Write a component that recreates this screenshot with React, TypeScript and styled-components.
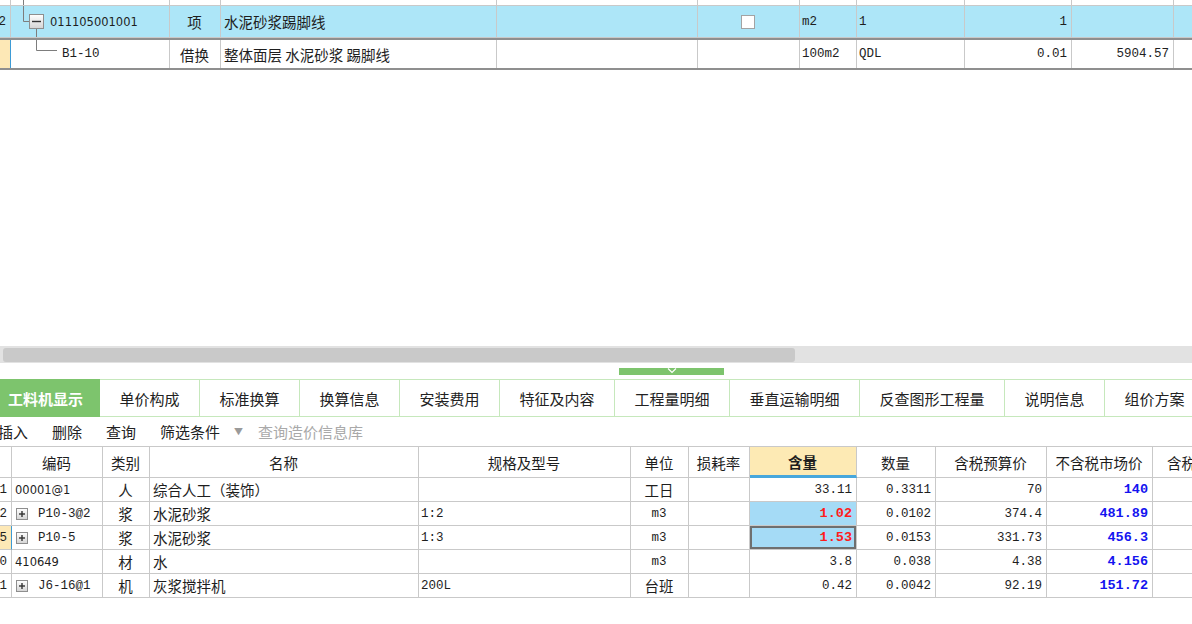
import React from 'react';
import styled, { createGlobalStyle, css } from 'styled-components';

// ============================================================================
// CONSTANTS
// ============================================================================

const CJK = `"Noto Sans CJK SC", "Microsoft YaHei", sans-serif`;
const MONO = `"Liberation Mono", "Noto Sans CJK SC", monospace`;
const SANS = `"DejaVu Sans", "Noto Sans CJK SC", sans-serif`;

const LINE = '#c9c9c9';
const TAB_LINE = '#c6e8bc';
const GREEN = '#7dc46d';
const ROW_BLUE = '#ade6f8';
const CELL_BLUE = '#a5dbf6';
const SEL_YELLOW = '#fde8b6';

const TOP_COLS = [11, 159, 51, 276, 201, 102, 57, 108, 107, 102, 100];
const BOTTOM_COLS = [12, 91, 47, 269, 212, 58, 61, 107, 79, 111, 106, 100];

const TABS = [
    { label: '工料机显示', width: 108, active: true },
    { label: '单价构成', width: 100 },
    { label: '标准换算', width: 100 },
    { label: '换算信息', width: 100 },
    { label: '安装费用', width: 100 },
    { label: '特征及内容', width: 115 },
    { label: '工程量明细', width: 115 },
    { label: '垂直运输明细', width: 130 },
    { label: '反查图形工程量', width: 145 },
    { label: '说明信息', width: 100 },
    { label: '组价方案', width: 100 },
];

const HEADERS = ['', '编码', '类别', '名称', '规格及型号', '单位', '损耗率', '含量', '数量', '含税预算价', '不含税市场价', '含税'];

interface MaterialRow {
    no: string;
    code: string;
    plus?: boolean;
    type: string;
    name: string;
    spec: string;
    unit: string;
    qty: string;
    amount: string;
    budget: string;
    market: string;
    hot?: boolean;
    selected?: boolean;
}

const MATERIALS: MaterialRow[] = [
    { no: '1', code: '00001@1', type: '人', name: '综合人工（装饰）', spec: '', unit: '工日', qty: '33.11', amount: '0.3311', budget: '70', market: '140' },
    { no: '2', code: 'P10-3@2', plus: true, type: '浆', name: '水泥砂浆', spec: '1:2', unit: 'm3', qty: '1.02', amount: '0.0102', budget: '374.4', market: '481.89', hot: true },
    { no: '5', code: 'P10-5', plus: true, type: '浆', name: '水泥砂浆', spec: '1:3', unit: 'm3', qty: '1.53', amount: '0.0153', budget: '331.73', market: '456.3', hot: true, selected: true },
    { no: '10', code: '410649', type: '材', name: '水', spec: '', unit: 'm3', qty: '3.8', amount: '0.038', budget: '4.38', market: '4.156' },
    { no: '11', code: 'J6-16@1', plus: true, type: '机', name: '灰浆搅拌机', spec: '200L', unit: '台班', qty: '0.42', amount: '0.0042', budget: '92.19', market: '151.72' },
];

// ============================================================================
// STYLED COMPONENTS
// ============================================================================

const GlobalStyle = createGlobalStyle`
  *, *::before, *::after { box-sizing: border-box; }
  html, body { margin: 0; padding: 0; background: #fff; }
  body {
    width: 1192px;
    height: 624px;
    overflow: hidden;
    font-family: ${CJK};
    color: #1e1e1e;
  }
`;

const Page = styled.div`
  width: 1192px;
  height: 624px;
  display: flex;
  flex-direction: column;
  overflow: hidden;
  background: #fff;
`;

const UpperPanel = styled.div`
  height: 363px;
  flex-shrink: 0;
  display: flex;
  flex-direction: column;
`;

const TopGridViewport = styled.div`
  height: 70px;
  overflow: hidden;
`;

const TopGridBody = styled.div`
  margin-top: -24px;
`;

const Row = styled.div<{ $cols: number[]; $h: number; $bg?: string; $focused?: boolean }>`
  display: grid;
  grid-template-columns: ${({ $cols }) => $cols.map((c) => `${c}px`).join(' ')};
  height: ${({ $h }) => $h}px;
  background: ${({ $bg }) => $bg ?? '#fff'};

  ${({ $focused }) => $focused && css`
    border-top: 2px solid #8f8f8f;
    border-bottom: 2px solid #8f8f8f;

    & > div {
      border-bottom: none;
    }
  `}
`;

type Align = 'left' | 'center' | 'right';
type Face = 'cjk' | 'mono' | 'sans';

const JUSTIFY: Record<Align, string> = { left: 'flex-start', center: 'center', right: 'flex-end' };

const FACES: Record<Face, string> = {
    cjk: `font-family: ${CJK}; font-size: 14.5px;`,
    mono: `font-family: ${MONO}; font-size: 12.5px;`,
    sans: `font-family: ${SANS}; font-size: 11.5px;`,
};

const Cell = styled.div<{
    $align?: Align;
    $face?: Face;
    $pl?: number;
    $pr?: number;
    $bg?: string;
    $bold?: boolean;
    $color?: string;
}>`
  position: relative;
  display: flex;
  align-items: center;
  justify-content: ${({ $align }) => JUSTIFY[$align ?? 'left']};
  padding: 0 ${({ $pr }) => $pr ?? 4}px 0 ${({ $pl }) => $pl ?? 3}px;
  border-right: 1px solid ${LINE};
  border-bottom: 1px solid ${LINE};
  overflow: hidden;
  white-space: nowrap;
  ${({ $face }) => FACES[$face ?? 'cjk']}
  background: ${({ $bg }) => $bg ?? 'transparent'};
  color: ${({ $color }) => $color ?? '#1e1e1e'};
  font-weight: ${({ $bold }) => ($bold ? 700 : 400)};
  ${({ $bold, $face }) => $bold && $face === 'mono' && css`font-size: 13.5px;`}
`;

const RowNumCell = styled(Cell)<{ $selected?: boolean }>`
  justify-content: flex-end;
  padding: 0 4px 0 0;
  font-family: ${MONO};
  font-size: 12.5px;
  ${({ $selected }) => $selected && css`
    background: ${SEL_YELLOW};
    border-right: 1px solid #3d9bd6;
  `}
`;

const FocusCell = styled(Cell)`
  box-shadow: inset 0 0 0 2px #6f6f6f;
`;

const TreeSvg = styled.svg`
  position: absolute;
  left: 0;
  top: 0;
  overflow: visible;
  pointer-events: none;
`;

const CheckBox = styled.span`
  width: 14px;
  height: 14px;
  border: 1px solid #a3a3a3;
  background: #fff;
`;

const BlankArea = styled.div`
  flex: 1;
`;

const ScrollTrack = styled.div`
  height: 17px;
  flex-shrink: 0;
  background: #e2e2e2;
  padding: 2px 0 1px 3px;
`;

const ScrollThumb = styled.div`
  width: 792px;
  height: 14px;
  border-radius: 3px;
  background: #c9c9c9;
`;

const Splitter = styled.div`
  height: 16px;
  flex-shrink: 0;
  padding-top: 5px;
`;

const SplitterHandle = styled.div`
  margin-left: 619px;
  width: 105px;
  height: 7px;
  background: ${GREEN};
  display: flex;
  justify-content: center;
`;

const TabStrip = styled.div`
  height: 38px;
  flex-shrink: 0;
  display: flex;
  margin-left: -8px;
`;

const Tab = styled.div<{ $w: number; $active?: boolean }>`
  width: ${({ $w }) => $w}px;
  flex-shrink: 0;
  display: flex;
  align-items: center;
  justify-content: center;
  font-size: 15px;
  white-space: nowrap;
  border-top: 1px solid ${TAB_LINE};
  border-bottom: 1px solid ${TAB_LINE};
  border-right: 1px solid ${TAB_LINE};
  color: #222;

  ${({ $active }) => $active && css`
    background: ${GREEN};
    border-color: ${GREEN};
    color: #fff;
    font-weight: 700;
  `}
`;

const Toolbar = styled.div`
  height: 29px;
  flex-shrink: 0;
  display: flex;
  align-items: center;
  margin-left: -2px;
  font-size: 15px;
`;

const ToolItem = styled.span<{ $muted?: boolean; $gap?: number }>`
  display: inline-flex;
  align-items: center;
  margin-right: ${({ $gap }) => $gap ?? 24}px;
  color: ${({ $muted }) => ($muted ? '#a9a9a9' : '#222')};
  white-space: nowrap;
`;

const DropArrow = styled.span`
  margin-left: 14px;
  font-size: 9px;
  color: #9a9a9a;
`;

const LowerGrid = styled.div`
  border-top: 1px solid ${LINE};
  flex-shrink: 0;
`;

const HeaderCell = styled(Cell)<{ $hot?: boolean }>`
  justify-content: ${({ $align }) => JUSTIFY[$align ?? 'center']};
  ${({ $hot }) => $hot && css`
    background: #fdeab4;
    border-bottom: 3px solid #47a7dc;
    font-weight: 700;
  `}
`;

const CodeWrap = styled.span`
  display: inline-flex;
  align-items: center;
  gap: 10px;
`;

// ============================================================================
// DRAWINGS
// ============================================================================

const ExpandBox: React.FC<{ size: number; minus?: boolean }> = ({ size, minus }) => {
    const m = size / 2;
    return (
        <svg width={size} height={size} viewBox={`0 0 ${size} ${size}`}>
            <defs>
                <linearGradient id={`eb${size}`} x1="0" y1="0" x2="0" y2="1">
                    <stop offset="0" stopColor="#ffffff" />
                    <stop offset="1" stopColor="#d4d4d4" />
                </linearGradient>
            </defs>
            <rect x="0.5" y="0.5" width={size - 1} height={size - 1} fill={`url(#eb${size})`} stroke="#8e8e8e" />
            <line x1={3} y1={m} x2={size - 3} y2={m} stroke="#333" strokeWidth="1.4" />
            {!minus && <line x1={m} y1={3} x2={m} y2={size - 3} stroke="#333" strokeWidth="1.4" />}
        </svg>
    );
};

const Chevron = () => (
    <svg width="12" height="6" viewBox="0 0 12 6">
        <polyline points="2,0.5 6,4.5 10,0.5" fill="none" stroke="#fff" strokeWidth="1.2" />
    </svg>
);

// ============================================================================
// COMPONENT
// ============================================================================

const TopGrid: React.FC = () => (
    <TopGridViewport>
        <TopGridBody>
            <Row $cols={TOP_COLS} $h={30}>
                <RowNumCell />
                <Cell>
                    <TreeSvg width="40" height="30">
                        <line x1="12.5" y1="8" x2="12.5" y2="31" stroke="#7d7d7d" />
                    </TreeSvg>
                </Cell>
                <Cell />
                <Cell />
                <Cell>措施项目</Cell>
                <Cell />
                <Cell />
                <Cell />
                <Cell />
                <Cell />
                <Cell />
            </Row>

            <Row $cols={TOP_COLS} $h={32} $bg={ROW_BLUE}>
                <RowNumCell>2</RowNumCell>
                <Cell $face="sans" $pl={39}>
                    <TreeSvg width="40" height="32">
                        <line x1="12.5" y1="-1" x2="12.5" y2="15.5" stroke="#7d7d7d" />
                        <line x1="12.5" y1="15.5" x2="18" y2="15.5" stroke="#7d7d7d" />
                        <line x1="25.5" y1="22" x2="25.5" y2="34" stroke="#7d7d7d" />
                        <g transform="translate(18,8)">
                            <ExpandBox size={15} minus />
                        </g>
                    </TreeSvg>
                    011105001001
                </Cell>
                <Cell $align="center">项</Cell>
                <Cell>水泥砂浆踢脚线</Cell>
                <Cell />
                <Cell $align="center" $pl={0} $pr={2}>
                    <CheckBox />
                </Cell>
                <Cell $face="mono" $pl={2}>m2</Cell>
                <Cell $face="mono" $pl={2}>1</Cell>
                <Cell $face="mono" $align="right">1</Cell>
                <Cell />
                <Cell />
            </Row>

            <Row $cols={TOP_COLS} $h={32} $focused>
                <RowNumCell $selected />
                <Cell $face="mono" $pl={51}>
                    <TreeSvg width="50" height="28">
                        <line x1="25.5" y1="-3" x2="25.5" y2="10.5" stroke="#7d7d7d" />
                        <line x1="25.5" y1="10.5" x2="46" y2="10.5" stroke="#7d7d7d" />
                    </TreeSvg>
                    B1-10
                </Cell>
                <Cell $align="center">借换</Cell>
                <Cell>整体面层 水泥砂浆 踢脚线</Cell>
                <Cell />
                <Cell />
                <Cell $face="mono" $pl={2}>100m2</Cell>
                <Cell $face="mono" $pl={2}>QDL</Cell>
                <Cell $face="mono" $align="right">0.01</Cell>
                <Cell $face="mono" $align="right">5904.57</Cell>
                <Cell />
            </Row>
        </TopGridBody>
    </TopGridViewport>
);

const MaterialGrid: React.FC = () => (
    <LowerGrid>
        <Row $cols={BOTTOM_COLS} $h={31}>
            {HEADERS.map((h, i) => (
                <HeaderCell
                    key={i}
                    $hot={h === '含量'}
                    $align={i === 11 ? 'left' : 'center'}
                    $pl={i === 11 ? 14 : 3}
                >
                    {h}
                </HeaderCell>
            ))}
        </Row>

        {MATERIALS.map((m) => {
            const QtyCell = m.selected ? FocusCell : Cell;
            return (
                <Row key={m.no} $cols={BOTTOM_COLS} $h={24}>
                    <RowNumCell $selected={m.selected}>{m.no}</RowNumCell>
                    <Cell $face={m.plus ? 'mono' : 'sans'} $pl={m.plus ? 4 : 3}>
                        {m.plus ? (
                            <CodeWrap>
                                <ExpandBox size={12} />
                                {m.code}
                            </CodeWrap>
                        ) : (
                            m.code
                        )}
                    </Cell>
                    <Cell $align="center">{m.type}</Cell>
                    <Cell>{m.name}</Cell>
                    <Cell $face="mono" $pl={2}>{m.spec}</Cell>
                    <Cell $align="center" $face={/^[a-z0-9]+$/.test(m.unit) ? 'mono' : 'cjk'}>
                        {m.unit}
                    </Cell>
                    <Cell />
                    <QtyCell
                        $face="mono"
                        $align="right"
                        $bg={m.hot ? CELL_BLUE : undefined}
                        $bold={m.hot}
                        $color={m.hot ? '#ff1c1c' : undefined}
                    >
                        {m.qty}
                    </QtyCell>
                    <Cell $face="mono" $align="right">{m.amount}</Cell>
                    <Cell $face="mono" $align="right">{m.budget}</Cell>
                    <Cell $face="mono" $align="right" $bold $color="#1414f0">{m.market}</Cell>
                    <Cell />
                </Row>
            );
        })}
    </LowerGrid>
);

export default function App() {
    return (
        <>
            <GlobalStyle />
            <Page>
                <UpperPanel>
                    <TopGrid />
                    <BlankArea />
                    <ScrollTrack>
                        <ScrollThumb />
                    </ScrollTrack>
                </UpperPanel>

                <Splitter>
                    <SplitterHandle>
                        <Chevron />
                    </SplitterHandle>
                </Splitter>

                <TabStrip>
                    {TABS.map((t) => (
                        <Tab key={t.label} $w={t.width} $active={t.active}>
                            {t.label}
                        </Tab>
                    ))}
                </TabStrip>

                <Toolbar>
                    <ToolItem>插入</ToolItem>
                    <ToolItem>删除</ToolItem>
                    <ToolItem>查询</ToolItem>
                    <ToolItem $gap={15}>
                        筛选条件
                        <DropArrow>▼</DropArrow>
                    </ToolItem>
                    <ToolItem $muted>查询造价信息库</ToolItem>
                </Toolbar>

                <MaterialGrid />
            </Page>
        </>
    );
}
